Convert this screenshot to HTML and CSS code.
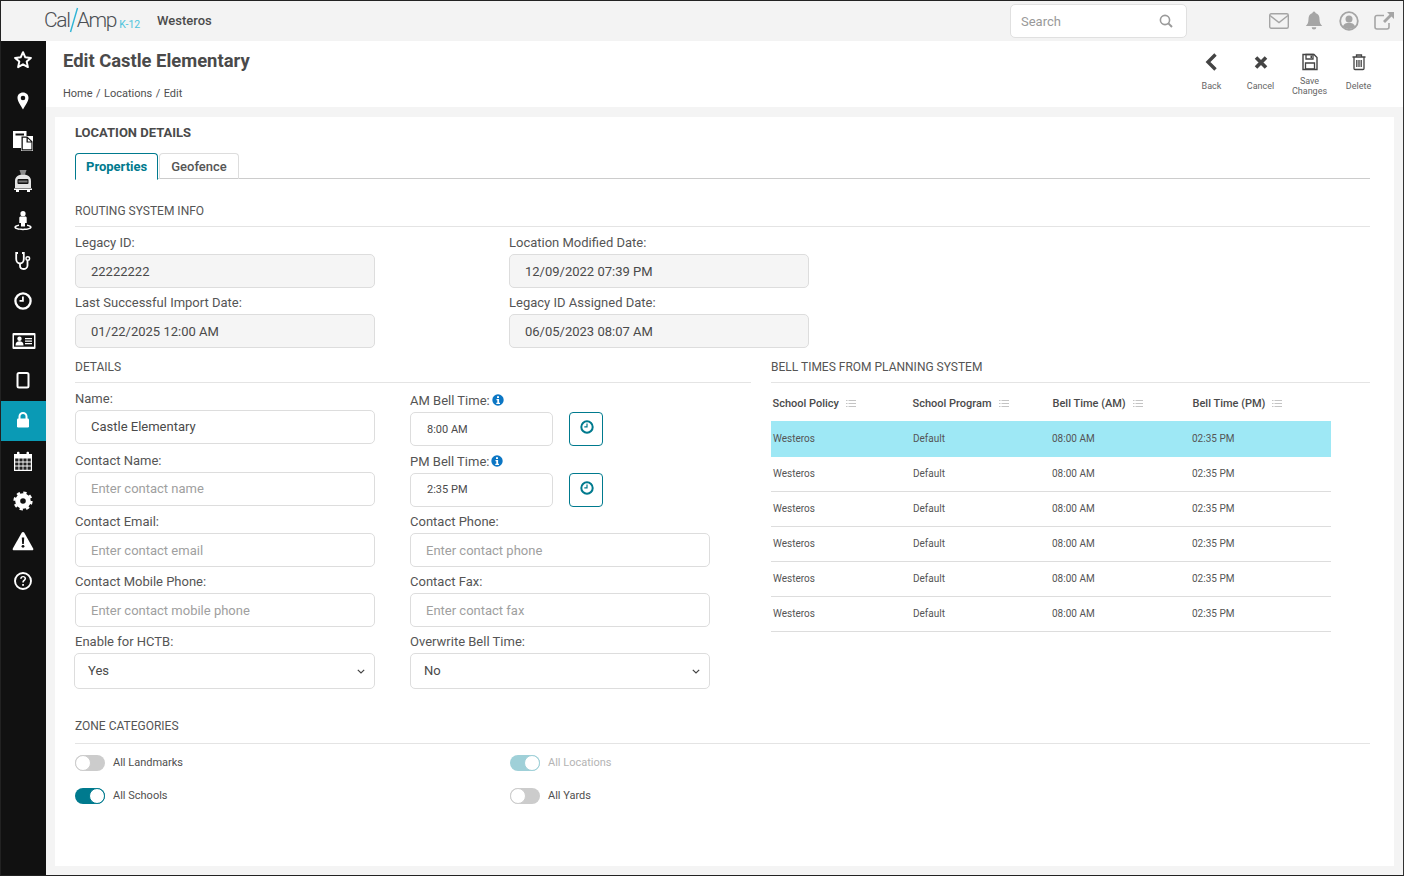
FILE: index.html
```html
<!DOCTYPE html>
<html lang="en">
<head>
<meta charset="utf-8">
<title>Edit Castle Elementary</title>
<link rel="stylesheet" href="styles.css">
</head>
<body>
<div class="app">
  <header class="topbar">
    <div class="logo"><span class="logo-cal">Cal</span><svg class="logo-slash" width="10" height="26" viewBox="0 0 10 26"><path d="M8.500 1 1.500 25" stroke="#2fb4d6" stroke-width="1.400" fill="none"/></svg><span class="logo-cal">Amp</span><span class="logo-k">K-12</span></div>
    <div class="org">Westeros</div>
    <div class="search"><span>Search</span>
      <svg width="14" height="14" viewBox="0 0 14 14"><circle cx="6" cy="6" r="4.600" fill="none" stroke="#9a9a9a" stroke-width="1.600"/><path d="M9.400 9.400 13 13" stroke="#9a9a9a" stroke-width="2"/></svg>
    </div>
    <div class="top-icons">
      <svg width="20" height="16" viewBox="0 0 20 16"><rect x=".7" y=".7" width="18.600" height="14.600" rx="1.500" fill="none" stroke="#a5a5a5" stroke-width="1.400"/><path d="M1 2.500 10 9.500 19 2.500" fill="none" stroke="#a5a5a5" stroke-width="1.400"/></svg>
      <svg width="20" height="20" viewBox="0 0 20 20"><path d="M10 .5a1.500 1.500 0 0 1 1.500 1.600C14.500 3 15.500 5.300 15.500 8c0 4 1.200 5.500 2.700 7H1.800C3.300 13.500 4.500 12 4.500 8c0-2.700 1-5 4-5.900A1.500 1.500 0 0 1 10 .5ZM7.700 16.200h4.600a2.300 2.300 0 0 1-4.600 0Z" fill="#a5a5a5"/></svg>
      <svg width="20" height="20" viewBox="0 0 20 20"><circle cx="10" cy="10" r="8.800" fill="none" stroke="#a5a5a5" stroke-width="1.800"/><circle cx="10" cy="8" r="3.500" fill="#a5a5a5"/><path d="M3.800 15.500c1-3 3.500-3.800 6.200-3.800s5.200.8 6.200 3.800a8.800 8.800 0 0 1-12.400 0Z" fill="#a5a5a5"/></svg>
      <svg width="20" height="18" viewBox="0 0 20 18"><path d="M10 3.500H3A2 2 0 0 0 1 5.500V15a2 2 0 0 0 2 2h10a2 2 0 0 0 2-2v-4" fill="none" stroke="#a5a5a5" stroke-width="1.600"/><path d="M13 0h7v7l-2.500-2.500L11 11 9 9l6.500-6.500Z" fill="#a5a5a5"/></svg>
    </div>
  </header>

  <div class="shell">
    <nav class="sidebar">
      <a class="nav-item"><svg width="20" height="20" viewBox="0 0 20 20"><path d="M10 1.200 12.300 6.300 17.900 6.900 13.700 10.600 14.900 16.100 10 13.300 5.100 16.100 6.300 10.600 2.100 6.900 7.700 6.300Z" fill="none" stroke="#fff" stroke-width="2" stroke-linejoin="round"/></svg></a>
      <a class="nav-item"><svg width="20" height="20" viewBox="0 0 20 20"><path d="M10 1.500c-3.300 0-5.500 2.400-5.500 5.400 0 3.500 3.700 7.900 5.500 11.600 1.800-3.700 5.500-8.100 5.500-11.600 0-3-2.200-5.400-5.500-5.400Zm0 3.200a2.300 2.300 0 1 1 0 4.600 2.300 2.300 0 0 1 0-4.600Z" fill="#fff" fill-rule="evenodd"/></svg></a>
      <a class="nav-item"><svg width="22" height="20" viewBox="0 0 22 20"><path d="M1 0h13.500v5H21v15H9v-3H1ZM3.500 2.500v2H12v-2Z" fill="#fff" fill-rule="evenodd"/><path d="M9.500 5.500h5.800l5.200 5v9h-11Z" fill="#111"/><path d="M10.800 6.800h3.700v4.700h4.900v6.800h-8.600ZM15.800 7.400l3.200 3h-3.200Z" fill="#fff"/></svg></a>
      <a class="nav-item"><svg width="20" height="22" viewBox="0 0 20 22"><path d="M6.500 0h7l-1.500 4.500H8Z" fill="#8a8a8a"/><path d="M2 11c0-4 3-6.500 8-6.500s8 2.500 8 6.500v7H2Z" fill="#e4e4e4"/><rect x="4.500" y="9" width="11" height="5" rx="1" fill="#111"/><path d="M5.500 10.500h9v2h-9Z" fill="#777"/><path d="M1 18.500h18V20H1ZM3 20h3v2H3ZM14 20h3v2h-3Z" fill="#fff"/></svg></a>
      <a class="nav-item"><svg width="20" height="20" viewBox="0 0 20 20"><circle cx="10" cy="2.700" r="2.600" fill="#fff"/><path d="M7.700 5.500h4.600c.9 0 1.400.6 1.400 1.400V12h-1.700v3.500H8V12H6.300V6.900c0-.8.500-1.400 1.400-1.400Z" fill="#fff"/><path d="M6 13.600c-2.700.4-4.700 1.300-4.700 2.700 0 1.700 3.900 2.900 8.700 2.900s8.700-1.200 8.700-2.900c0-1.400-2-2.300-4.700-2.700v1.500c1.800.3 2.900.8 2.900 1.200 0 .7-3 1.400-6.900 1.400s-6.900-.7-6.900-1.400c0-.4 1.100-.9 2.900-1.200Z" fill="#fff"/></svg></a>
      <a class="nav-item"><svg width="20" height="20" viewBox="0 0 20 20"><path d="M5 2H3.200v6c0 3 2 4.500 3.800 4.500S10.800 11 10.800 8V2H9" fill="none" stroke="#fff" stroke-width="1.800"/><path d="M7 12.500v2c0 2 1.500 3.500 3.500 3.500s4-1.500 4-3.500V9.500" fill="none" stroke="#fff" stroke-width="1.800"/><circle cx="14.800" cy="7.500" r="1.800" fill="none" stroke="#fff" stroke-width="1.400"/></svg></a>
      <a class="nav-item"><svg width="20" height="20" viewBox="0 0 20 20"><circle cx="10" cy="10" r="7.600" fill="none" stroke="#fff" stroke-width="2.300"/><path d="M10.800 5.500v5.300H6.500V9H9V5.500Z" fill="#fff"/></svg></a>
      <a class="nav-item"><svg class="id-icon" width="24" height="18" viewBox="0 0 24 18"><rect x=".5" y="1" width="23" height="16" rx="1" fill="#fff"/><rect x="2" y="3.300" width="20" height="11.400" fill="#111"/><circle cx="7.500" cy="6.800" r="2.200" fill="#fff"/><path d="M3.500 13.500c0-3 1.500-4.200 4-4.200s4 1.200 4 4.200Z" fill="#fff"/><path d="M13 6h7v1.300h-7ZM13 8.500h7v1.300h-7ZM13 11h7v1.300h-7Z" fill="#fff"/></svg></a>
      <a class="nav-item"><svg width="20" height="20" viewBox="0 0 20 20"><rect x="4.500" y="2" width="11" height="14.500" rx="1.500" fill="none" stroke="#fff" stroke-width="2"/></svg></a>
      <a class="nav-item active"><svg width="20" height="20" viewBox="0 0 20 20"><path d="M6.500 8V5.500a3.500 3.500 0 0 1 7 0V8" fill="none" stroke="#fff" stroke-width="2"/><rect x="4" y="7.500" width="12" height="9" rx="1.200" fill="#fff"/></svg></a>
      <a class="nav-item"><svg width="20" height="20" viewBox="0 0 20 20"><path d="M1 3h3V1.500C4 .5 6.500.5 6.500 1.500V3h7V1.500c0-1 2.500-1 2.500 0V3h3v17H1Z" fill="#fff"/><path d="M2.200 7.500h3.300v3h-3.300ZM6.400 7.500h3.200v3H6.400ZM10.400 7.500h3.200v3h-3.200ZM14.500 7.500h3.300v3h-3.300ZM2.200 11.400h3.300v3.200H2.200ZM6.400 11.400h3.200v3.200H6.400ZM10.400 11.400h3.200v3.200h-3.200ZM14.500 11.400h3.300v3.200h-3.300ZM2.200 15.500h3.300v3.200H2.200ZM6.400 15.500h3.200v3.200H6.400ZM10.400 15.500h3.200v3.200h-3.200ZM14.500 15.500h3.300v3.200h-3.300Z" fill="#222"/></svg></a>
      <a class="nav-item"><svg width="20" height="20" viewBox="0 0 20 20"><circle cx="10" cy="10" r="5.300" fill="none" stroke="#fff" stroke-width="5"/><circle cx="10" cy="10" r="8.400" fill="none" stroke="#fff" stroke-width="2.400" stroke-dasharray="3.300 3.300"/></svg></a>
      <a class="nav-item"><svg width="22" height="20" viewBox="0 0 22 20"><path d="M11 1c.6 0 1 .3 1.300.8l8.900 15.600c.5.900-.1 1.800-1.100 1.800H1.900c-1 0-1.600-.9-1.100-1.800L9.700 1.800C10 1.300 10.400 1 11 1Z" fill="#fff"/><path d="M9.800 6.500h2.400l-.4 6.500h-1.600Z" fill="#111"/><circle cx="11" cy="15.300" r="1.400" fill="#111"/></svg></a>
      <a class="nav-item"><svg width="20" height="20" viewBox="0 0 20 20"><circle cx="10" cy="10" r="8" fill="none" stroke="#fff" stroke-width="1.900"/><path d="M7.100 7.800c0-1.800 1.300-2.900 3-2.900s3 1 3 2.600c0 2.300-2.300 2.300-2.300 4H9.300c0-2.800 2.200-2.600 2.200-4 0-.7-.6-1.200-1.400-1.200s-1.400.6-1.400 1.500Z" fill="#fff"/><rect x="9.200" y="13" width="1.700" height="1.800" fill="#fff"/></svg></a>
    </nav>

    <main class="content">
      <div class="page-head">
        <div>
          <h1 class="page-title">Edit Castle Elementary</h1>
          <div class="crumbs">Home / Locations / Edit</div>
        </div>
        <div class="actions">
          <div class="action"><svg width="16" height="18" viewBox="0 0 16 18"><path d="M11.500 1.500 4 9l7.500 7.500" fill="none" stroke="#444" stroke-width="3.400"/></svg><span>Back</span></div>
          <div class="action"><svg width="16" height="18" viewBox="0 0 16 18"><path d="M3 4.500 13 14.500M13 4.500 3 14.500" fill="none" stroke="#444" stroke-width="3.600"/></svg><span>Cancel</span></div>
          <div class="action a-save"><svg width="16" height="18" viewBox="0 0 16 18"><path d="M1 1.500h11L15 4.500v12H1Z" fill="none" stroke="#444" stroke-width="1.400"/><path d="M4 1.500h7v4.500H4ZM3.500 10h9v6h-9Z" fill="none" stroke="#444" stroke-width="1.300"/><path d="M8.500 2.500h1.500v2.500H8.500Z" fill="#444"/></svg><span>Save<br>Changes</span></div>
          <div class="action"><svg width="16" height="18" viewBox="0 0 16 18"><path d="M1.500 4h13M5.500 4V2h5v2M3 4v11.500a1 1 0 0 0 1 1h8a1 1 0 0 0 1-1V4M5.800 7v7M8 7v7M10.200 7v7" fill="none" stroke="#444" stroke-width="1.300"/></svg><span>Delete</span></div>
        </div>
      </div>

      <div class="main-area">
        <section class="card">
          <h2 class="card-title">LOCATION DETAILS</h2>
          <div class="tabs"><a class="tab on">Properties</a><a class="tab">Geofence</a></div>

          <h3 class="sec sec-routing">ROUTING SYSTEM INFO</h3>
          <div class="routing">
            <div class="field"><label>Legacy ID:</label><div class="input ro">22222222</div></div>
            <div class="field"><label>Location Modified Date:</label><div class="input ro">12/09/2022 07:39 PM</div></div>
            <div class="field"><label>Last Successful Import Date:</label><div class="input ro">01/22/2025 12:00 AM</div></div>
            <div class="field"><label>Legacy ID Assigned Date:</label><div class="input ro">06/05/2023 08:07 AM</div></div>
          </div>

          <div class="split">
            <div class="details">
              <h3 class="sec">DETAILS</h3>
              <div class="details-cols">
                <div class="col">
                  <div class="field"><label>Name:</label><div class="input">Castle Elementary</div></div>
                  <div class="field g8"><label>Contact Name:</label><div class="input ph">Enter contact name</div></div>
                  <div class="field g7"><label>Contact Email:</label><div class="input ph low">Enter contact email</div></div>
                  <div class="field g6"><label>Contact Mobile Phone:</label><div class="input ph low">Enter contact mobile phone</div></div>
                  <div class="field g6"><label>Enable for HCTB:</label><div class="input select select-l">Yes<svg width="8" height="5" viewBox="0 0 8 5"><path d="M.8.800 4 4 7.200.8" fill="none" stroke="#444" stroke-width="1.200"/></svg></div></div>
                </div>
                <div class="col col-r">
                  <div class="field"><label>AM Bell Time:<svg class="info" width="12" height="12" viewBox="0 0 12 12"><circle cx="6" cy="6" r="5.700" fill="#0b76c4"/><path d="M5 2.300h2v1.700H5ZM4.500 5h2.600v3.800H8V10H4.300V8.800h1V6.200h-.8Z" fill="#fff"/></svg></label>
                    <div class="time-row"><div class="input time low">8:00 AM</div><button class="clock"><svg width="14" height="14" viewBox="0 0 14 14"><circle cx="7" cy="7" r="5.700" fill="none" stroke="#007a8e" stroke-width="2"/><path d="M7.600 3.500v4H4.300V6.300h2.100V3.500Z" fill="#007a8e"/></svg></button></div></div>
                  <div class="field g7"><label>PM Bell Time:<svg class="info" width="12" height="12" viewBox="0 0 12 12"><circle cx="6" cy="6" r="5.700" fill="#0b76c4"/><path d="M5 2.300h2v1.700H5ZM4.500 5h2.600v3.800H8V10H4.300V8.800h1V6.200h-.8Z" fill="#fff"/></svg></label>
                    <div class="time-row"><div class="input time">2:35 PM</div><button class="clock"><svg width="14" height="14" viewBox="0 0 14 14"><circle cx="7" cy="7" r="5.700" fill="none" stroke="#007a8e" stroke-width="2"/><path d="M7.600 3.500v4H4.300V6.300h2.100V3.500Z" fill="#007a8e"/></svg></button></div></div>
                  <div class="field g6"><label>Contact Phone:</label><div class="input ph low">Enter contact phone</div></div>
                  <div class="field g6"><label>Contact Fax:</label><div class="input ph low">Enter contact fax</div></div>
                  <div class="field g6"><label>Overwrite Bell Time:</label><div class="input select">No<svg width="8" height="5" viewBox="0 0 8 5"><path d="M.8.800 4 4 7.200.8" fill="none" stroke="#444" stroke-width="1.200"/></svg></div></div>
                </div>
              </div>
            </div>
            <div class="bells">
              <h3 class="sec">BELL TIMES FROM PLANNING SYSTEM</h3>
              <table class="grid">
                <thead><tr>
                  <th>School Policy<svg class="menu" width="10" height="7" viewBox="0 0 10 7"><path d="M0 .5h1.500M0 3.500h1.500M0 6.500h1.500M2.500 .5H10M2.500 3.500H10M2.500 6.500H10" stroke="#c4c4c4"/></svg></th>
                  <th>School Program<svg class="menu" width="10" height="7" viewBox="0 0 10 7"><path d="M0 .5h1.500M0 3.500h1.500M0 6.500h1.500M2.500 .5H10M2.500 3.500H10M2.500 6.500H10" stroke="#c4c4c4"/></svg></th>
                  <th>Bell Time (AM)<svg class="menu" width="10" height="7" viewBox="0 0 10 7"><path d="M0 .5h1.500M0 3.500h1.500M0 6.500h1.500M2.500 .5H10M2.500 3.500H10M2.500 6.500H10" stroke="#c4c4c4"/></svg></th>
                  <th>Bell Time (PM)<svg class="menu" width="10" height="7" viewBox="0 0 10 7"><path d="M0 .5h1.500M0 3.500h1.500M0 6.500h1.500M2.500 .5H10M2.500 3.500H10M2.500 6.500H10" stroke="#c4c4c4"/></svg></th>
                </tr></thead>
                <tbody>
                  <tr class="sel"><td>Westeros</td><td>Default</td><td>08:00 AM</td><td>02:35 PM</td></tr>
                  <tr><td>Westeros</td><td>Default</td><td>08:00 AM</td><td>02:35 PM</td></tr>
                  <tr><td>Westeros</td><td>Default</td><td>08:00 AM</td><td>02:35 PM</td></tr>
                  <tr><td>Westeros</td><td>Default</td><td>08:00 AM</td><td>02:35 PM</td></tr>
                  <tr><td>Westeros</td><td>Default</td><td>08:00 AM</td><td>02:35 PM</td></tr>
                  <tr><td>Westeros</td><td>Default</td><td>08:00 AM</td><td>02:35 PM</td></tr>
                </tbody>
              </table>
            </div>
          </div>

          <h3 class="sec sec-zone">ZONE CATEGORIES</h3>
          <div class="zones">
            <div class="zone"><span class="toggle"></span>All Landmarks</div>
            <div class="zone off"><span class="toggle on dim"></span>All Locations</div>
            <div class="zone"><span class="toggle on"></span>All Schools</div>
            <div class="zone"><span class="toggle"></span>All Yards</div>
          </div>
        </section>
      </div>
    </main>
  </div>
</div>
</body>
</html>
```
FILE: styles.css
```css
*, *::after { box-sizing: border-box; }
html, body { margin: 0; height: 100%; }
body { font-family: Roboto, "Liberation Sans", sans-serif; color: #555; font-size: 13px; overflow: hidden; background: #f4f4f4; }
.app { width: 1404px; height: 876px; border: 1px solid #222; border-right-color: #333; display: flex; flex-direction: column; overflow: hidden; }

.topbar { height: 40px; flex: none; background: #f3f3f3; display: flex; align-items: center; padding-left: 43px; }
.logo { display: flex; align-items: center; width: 113px; padding-bottom: 2px; color: #4b4f54; font-size: 21px; font-weight: 300; letter-spacing: -1.300px; }
.logo-slash { margin: 0 -2px 0 -1px; }
.logo-k { font-size: 10.500px; color: #4fc3dc; margin: 9px 0 0 3px; letter-spacing: 0; font-weight: 400; }
.org { font-size: 13px; font-weight: 500; color: #4b4b4b; padding-bottom: 2px; }
.search { margin-left: auto; width: 177px; height: 34px; background: #fff; border: 1px solid #e0e0e0; border-radius: 5px; display: flex; align-items: center; justify-content: space-between; padding: 0 13px 0 10px; color: #999; font-size: 13px; }
.top-icons { width: 216px; display: flex; align-items: center; padding-left: 82px; gap: 15px; }

.shell { flex: 1; display: flex; min-height: 0; }
.sidebar { width: 45px; flex: none; background: #111; }
.nav-item { height: 40px; display: flex; align-items: center; justify-content: center; padding-right: 2px; }
.nav-item.active { background: #0a9ab5; }
.id-icon { margin-left: 3px; }

.content { flex: 1; display: flex; flex-direction: column; min-width: 0; }
.page-head { height: 66px; flex: none; background: #fff; display: flex; justify-content: space-between; padding: 9px 20px 0 17px; }
.page-title { margin: 0; font-size: 18.400px; line-height: 22px; font-weight: 700; color: #4a4a4a; }
.crumbs { margin-top: 15px; font-size: 11px; line-height: 14px; color: #4f4f4f; word-spacing: .7px; }
.actions { display: flex; padding-top: 3px; }
.action { width: 49px; display: flex; flex-direction: column; align-items: center; font-size: 9px; line-height: 10px; color: #666; text-align: center; }
.action svg { height: 18px; margin-bottom: 6px; flex: none; }
.action span { display: flex; align-items: flex-end; height: 14px; }
.a-save span { display: block; margin-top: -1px; height: 24px; }

.main-area { flex: 1; padding: 10px 9px 9px 9px; min-height: 0; }
.card { height: 100%; background: #fff; padding: 8px 24px 0 20px; }
.card-title { margin: 0; font-size: 13px; line-height: 16px; font-weight: 700; color: #4a4a4a; }

.tabs { display: flex; margin-top: 12px; height: 26px; border-bottom: 1px solid #ccc; }
.tab { height: 26px; padding: 0 11px; line-height: 26px; font-size: 13px; font-weight: 500; color: #555; border: 1px solid #ddd; border-bottom: 0; border-radius: 4px 4px 0 0; }
.tab.on { color: #007a8e; font-weight: 700; border-color: #007a8e; height: 27px; background: #fff; padding: 0 10px; border-bottom: 1px solid #fff; margin-right: 1px; }

.sec { margin: 0; height: 24px; line-height: 16px; font-size: 12px; font-weight: 400; color: #555; border-bottom: 1px solid #e4e4e4; }
.sec-routing { margin-top: 24px; }

.routing { display: grid; grid-template-columns: 300px 300px; column-gap: 134px; row-gap: 6px; margin: 7px 0 11px; }
.field label { display: flex; align-items: flex-start; gap: 2px; height: 20px; line-height: 17px; font-size: 13px; color: #555; }
.info { margin-top: 2px; }
.input { height: 34px; line-height: 32px; padding: 0 15px; border: 1px solid #ddd; border-radius: 5px; font-size: 13px; color: #4a4a4a; background: #fff; }
.input.ro { background: #f5f5f5; line-height: 34px; }
.input.ph { color: #a0a0a0; }
.input.low { line-height: 34px; }
.select { height: 36px; line-height: 34px; padding: 0 9px 0 13px; display: flex; justify-content: space-between; align-items: center; }
.select-l { margin-left: -1px; width: 301px; }
.time-row { display: flex; gap: 16px; }
.time { width: 143px; font-size: 11px; padding-left: 16px; }
.clock { width: 34px; height: 34px; padding: 7px 0 0 1px; border: 1px solid #007a8e; border-radius: 4px; background: #fff; display: flex; align-items: flex-start; justify-content: center; }

.split { display: flex; gap: 20px; }
.details { width: 676px; flex: none; }
.details-cols { display: flex; gap: 35px; margin-top: 7px; }
.col { width: 300px; }
.col-r { padding-top: 2px; }
.g6 { margin-top: 6px; }
.g7 { margin-top: 7px; }
.g8 { margin-top: 8px; }
.bells { flex: 1; }
.grid { width: 560px; border-collapse: collapse; table-layout: fixed; margin-top: 3px; }
.grid th { height: 35px; padding: 0 0 0 1.500px; text-align: left; font-size: 11px; font-weight: 500; color: #4a4a4a; }
.menu { margin-left: 7px; }
.grid td { height: 35px; padding: 0 0 0 2px; font-size: 10px; color: #555; border-bottom: 1px solid #ddd; }
.grid td:nth-child(n+3) { padding-left: 1px; }
.grid .sel td { background: #9ee8f5; border-bottom-color: #9ee8f5; }

.sec-zone { margin-top: 29px; height: 26px; }
.zones { display: grid; grid-template-columns: 435px 1fr; row-gap: 17px; margin-top: 11px; }
.zone { display: flex; align-items: flex-start; gap: 8px; height: 16px; line-height: 15px; font-size: 11px; color: #4f4f4f; }
.zone.off { color: #b4b4b4; }
.toggle { width: 30px; height: 16px; border-radius: 8px; background: #ccc; position: relative; flex: none; }
.toggle::after { content: ""; position: absolute; left: 0; top: 0; width: 16px; height: 16px; border-radius: 50%; background: #fff; border: 1px solid #ccc; }
.toggle.on { background: #007a8e; }
.toggle.on::after { left: 14px; border-color: #007a8e; }
.toggle.dim { background: #9fd0d8; }
.toggle.dim::after { border-color: #9fd0d8; }
```
